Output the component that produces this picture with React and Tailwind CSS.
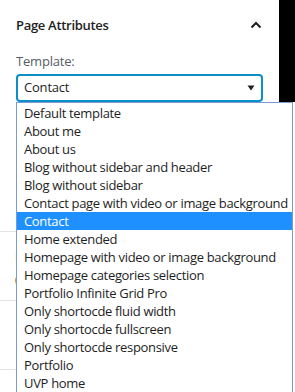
import React from "react";

const items = [
  "Default template",
  "About me",
  "About us",
  "Blog without sidebar and header",
  "Blog without sidebar",
  "Contact page with video or image background",
  "Contact",
  "Home extended",
  "Homepage with video or image background",
  "Homepage categories selection",
  "Portfolio Infinite Grid Pro",
  "Only shortocde fluid width",
  "Only shortocde fullscreen",
  "Only shortocde responsive",
  "Portfolio",
  "UVP home",
];

export default function App() {
  return (
    <div className="relative w-[295px] h-[392px] overflow-hidden bg-white text-[#1e1e1e] font-['Open_Sans',sans-serif]">
      <div className="flex">
        <div className="w-[279px] flex flex-col">
          <div className="flex items-center justify-between pl-4 pr-[16px] h-[48px]">
            <span className="text-[13px] font-semibold tracking-[-0.3px] text-[#1e1e1e] mt-[3px]">Page Attributes</span>
            <svg width="12" height="8" viewBox="0 0 12 8" className="mr-[1px] mt-[1px]">
              <path d="M1.5 6.5 L6 2 L10.5 6.5" fill="none" stroke="#1e1e1e" strokeWidth="2" />
            </svg>
          </div>
          <div className="px-4 text-[13px] tracking-[-0.2px] text-[#555d66] leading-[18px] mt-[4px]">Template:</div>
          <div className="px-4 mt-[4px]">
            <div className="h-[28px] rounded-[4px] border-2 border-[#0a8fc7] flex items-center justify-between pl-[6px] pr-[6px]">
              <span className="text-[13px] tracking-[-0.2px] text-[#1e1e1e]">Contact</span>
              <svg width="8" height="6" viewBox="0 0 8 6">
                <path d="M0.5 0.5 H7.5 L4 5.5 Z" fill="#222" />
              </svg>
            </div>
          </div>
          <div className="h-[130px] border-b border-[#e2e4e7]" />
          <div className="h-[69px] border-b border-[#e2e4e7] pl-[15px] pt-[14px] text-[13px] leading-[22px]">
            <div className="text-[#8a5a2b]">I</div>
            <div>(</div>
          </div>
          <div className="h-[69px] border-b border-[#e2e4e7]" />
        </div>
        <div className="w-[16px] h-[102px] bg-black" />
      </div>
      <div className="absolute left-[16px] top-[102px] w-[277px] h-[300px] bg-white border border-[#7b9bd0] pt-[1px]">
        {items.map((t) => (
          <div
            key={t}
            className={
              "h-[18px] leading-[18px] pl-[7px] text-[13px] tracking-[-0.32px] whitespace-nowrap " +
              (t === "Contact" ? "bg-[#1e90ff] text-white" : "text-[#1e1e1e]")
            }
          >
            {t}
          </div>
        ))}
      </div>
    </div>
  );
}
